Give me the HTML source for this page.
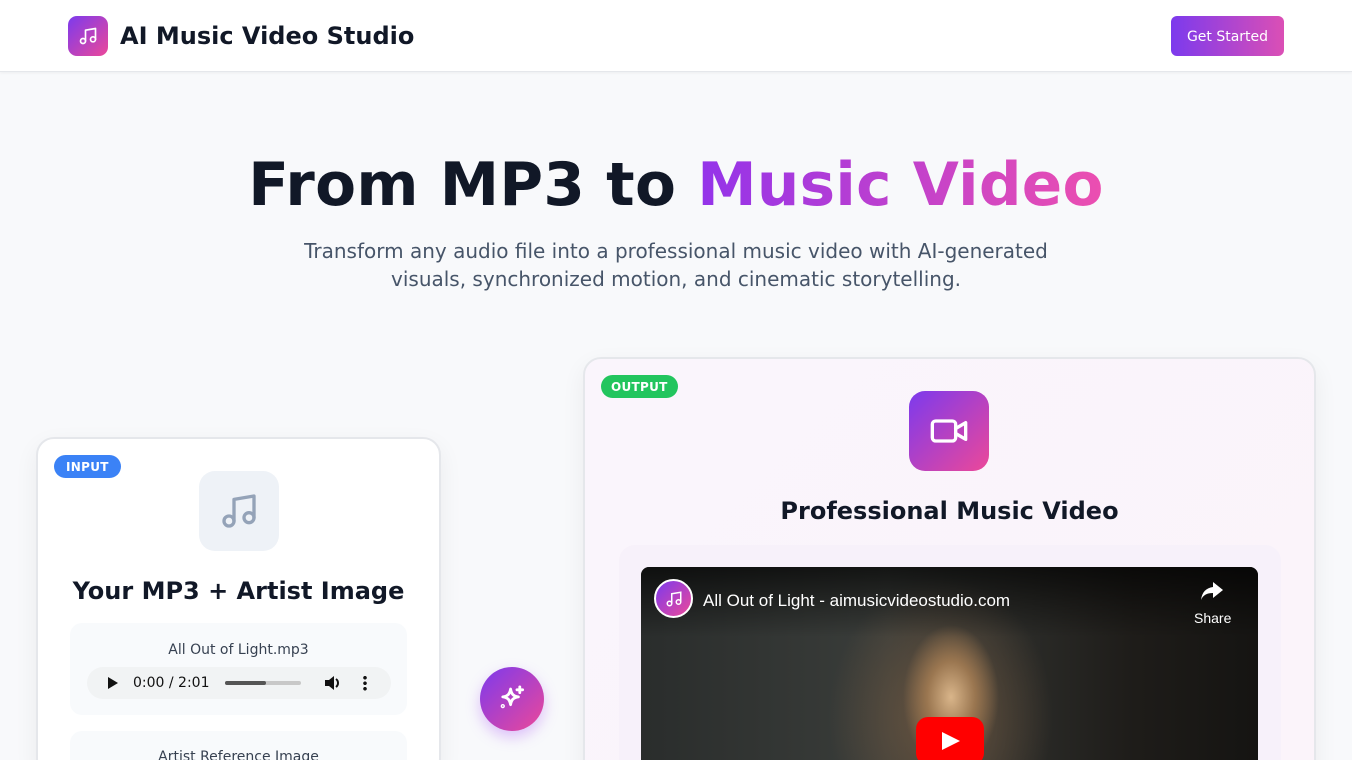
<!DOCTYPE html>
<html><head><meta charset="utf-8"><style>
*{box-sizing:border-box;margin:0;padding:0}
html{width:1352px;height:760px;overflow:hidden}
body{width:1352px;height:760px;overflow:hidden;background:#f8f9fb;font-family:"DejaVu Sans","Liberation Sans",sans-serif;position:relative;color:#0f172a}
.hdr{position:absolute;left:0;top:0;width:1352px;height:72px;background:#fff;border-bottom:1px solid #e5e7eb;box-shadow:0 1px 3px rgba(0,0,0,.05)}
.logo{position:absolute;left:68px;top:16px;width:40px;height:40px;border-radius:9px;background:linear-gradient(135deg,#7c3aed,#ec4899);display:flex;align-items:center;justify-content:center}
.brand{position:absolute;left:120px;top:22px;font-size:24px;font-weight:bold;color:#111827}
.btn{position:absolute;left:1171px;top:16px;width:113px;height:40px;border-radius:6px;background:linear-gradient(90deg,#7c3aed,#db4fb5);color:#fff;font-size:14px;display:flex;align-items:center;justify-content:center;padding-top:1px}
h1{position:absolute;left:0;width:1352px;top:151px;text-align:center;font-size:59.6px;font-weight:bold;color:#111827;letter-spacing:.3px}
h1 span{background:linear-gradient(90deg,#9333ea,#ec4fb0);-webkit-background-clip:text;color:transparent}
.sub{position:absolute;left:0;width:1352px;top:237px;text-align:center;font-size:20px;line-height:28px;color:#475569}
.card{position:absolute;background:#fff;border:2px solid #e5e7eb;border-radius:18px;box-shadow:0 8px 24px rgba(0,0,0,.06)}
.badge{position:absolute;color:#fff;font-size:12px;font-weight:bold;border-radius:12px;height:23px;display:flex;align-items:center;padding:0 12px;letter-spacing:.3px}
.in-ic{position:absolute;left:199px;top:471px;width:80px;height:80px;border-radius:16px;background:#eef2f7;display:flex;align-items:center;justify-content:center}
.t2{position:absolute;font-weight:bold;text-align:center}
.box{position:absolute;left:70px;width:337px;background:#f8fafc;border-radius:12px}
.player{position:absolute;left:87px;top:667px;width:304px;height:32px;border-radius:16px;background:#f1f3f4;font-size:14px;color:#111}
</style></head><body>
<div class="hdr">
<div class="logo"><svg width="20" height="20" viewBox="0 0 24 24" fill="none" stroke="#fff" stroke-width="2" stroke-linecap="round" stroke-linejoin="round"><path d="M9 18V5l12-2v13"/><circle cx="6" cy="18" r="3"/><circle cx="18" cy="16" r="3"/></svg></div>
<div class="brand">AI Music Video Studio</div>
<div class="btn">Get Started</div>
</div>
<h1>From MP3 to <span>Music Video</span></h1>
<div class="sub">Transform any audio file into a professional music video with AI-generated<br>visuals, synchronized motion, and cinematic storytelling.</div>

<div class="card" style="left:36px;top:437px;width:405px;height:340px"></div>
<div class="badge" style="left:54px;top:455px;background:#3b82f6">INPUT</div>
<div class="in-ic"><svg width="40" height="40" viewBox="0 0 24 24" fill="none" stroke="#94a3b8" stroke-width="2" stroke-linecap="round" stroke-linejoin="round"><path d="M9 18V5l12-2v13"/><circle cx="6" cy="18" r="3"/><circle cx="18" cy="16" r="3"/></svg></div>
<div class="t2" style="left:36px;width:405px;top:577px;font-size:24px;color:#111827">Your MP3 + Artist Image</div>
<div class="box" style="top:623px;height:92px"></div>
<div style="position:absolute;left:70px;width:337px;top:642px;text-align:center;font-size:14px;color:#374151">All Out of Light.mp3</div>
<div class="player">
<svg style="position:absolute;left:20px;top:10px" width="11" height="12" viewBox="0 0 11 12"><path d="M1 0L11 6L1 12Z" fill="#111"/></svg>
<span style="position:absolute;left:46px;top:8px">0:00 / 2:01</span>
<div style="position:absolute;left:138px;top:14px;width:76px;height:4px;background:#c8c8c8;border-radius:2px"><div style="width:41px;height:4px;background:#555;border-radius:2px"></div></div>
<svg style="position:absolute;left:237px;top:8px" width="18" height="16" viewBox="0 0 18 16"><path d="M1 5h4l5-4v14l-5-4H1z" fill="#111"/><path d="M12 4a5 5 0 010 8" stroke="#111" stroke-width="2" fill="none"/></svg>
<div style="position:absolute;left:276px;top:8px;width:4px;height:16px;background:radial-gradient(circle,#111 1.6px,transparent 2px) 0 0/4px 5.5px"></div>
</div>
<div class="box" style="top:731px;height:40px"></div>
<div style="position:absolute;left:70px;width:337px;top:749px;text-align:center;font-size:14px;color:#374151">Artist Reference Image</div>

<div style="position:absolute;left:480px;top:667px;width:64px;height:64px;border-radius:50%;background:linear-gradient(135deg,#7c3aed,#ec4899);box-shadow:0 6px 14px rgba(168,85,247,.35);display:flex;align-items:center;justify-content:center">
<svg width="34" height="34" viewBox="0 0 24 24" fill="none" stroke="#fff" stroke-width="2" stroke-linecap="round" stroke-linejoin="round"><path d="M11 5c.6 3.5 2 5 5.5 5.5C13 11 11.6 12.5 11 16c-.6-3.5-2-5-5.5-5.5C9 10 10.4 8.5 11 5z"/><path d="M17.5 3.5v4M15.5 5.5h4"/><circle cx="5.5" cy="17" r=".5"/></svg></div>

<div class="card" style="left:583px;top:357px;width:733px;height:430px;background:linear-gradient(135deg,#faf5fc,#fbf4fa)"></div>
<div class="badge" style="left:601px;top:375px;background:#22c55e;padding:0 10px">OUTPUT</div>
<div style="position:absolute;left:909px;top:391px;width:80px;height:80px;border-radius:16px;background:linear-gradient(135deg,#7c3aed,#ec4899);display:flex;align-items:center;justify-content:center">
<svg width="40" height="40" viewBox="0 0 24 24" fill="none" stroke="#fff" stroke-width="2" stroke-linecap="round" stroke-linejoin="round"><rect x="2" y="6" width="14" height="12" rx="2"/><path d="M16 10.5l6-3.5v10l-6-3.5"/></svg></div>
<div class="t2" style="left:583px;width:733px;top:497px;font-size:24px;color:#111827">Professional Music Video</div>
<div style="position:absolute;left:619px;top:545px;width:662px;height:215px;background:#f7f1fa;border-radius:16px 16px 0 0"></div>
<div style="position:absolute;left:641px;top:567px;width:617px;height:193px;border-radius:8px 8px 0 0;overflow:hidden;background:radial-gradient(ellipse 60px 90px at 310px 130px,#d9b58a 0%,#9a7650 40%,transparent 80%), radial-gradient(ellipse 160px 200px at 300px 150px,#6a5540,transparent 70%), linear-gradient(90deg,#2a2d2c,#3a3d3a 40%,#1e1c19 80%,#151412)">
<div style="position:absolute;left:0;top:0;width:617px;height:70px;background:linear-gradient(#000a,transparent)"></div>
<div style="position:absolute;left:13px;top:12px;width:39px;height:39px;border-radius:50%;background:linear-gradient(135deg,#7c3aed,#ec4899);border:2px solid #fff;display:flex;align-items:center;justify-content:center"><svg width="18" height="18" viewBox="0 0 24 24" fill="none" stroke="#fff" stroke-width="2"><path d="M9 18V5l12-2v13"/><circle cx="6" cy="18" r="3"/><circle cx="18" cy="16" r="3"/></svg></div>
<div style="position:absolute;left:62px;top:24px;color:#fff;font-size:17px;font-family:'Liberation Sans',sans-serif">All Out of Light - aimusicvideostudio.com</div>
<svg style="position:absolute;left:560px;top:15px" width="22" height="18" viewBox="0 0 22 18"><path d="M12 0l10 8-10 8v-5C6 11 2 13 0 18 1 10 5 6 12 5z" fill="#fff"/></svg>
<div style="position:absolute;left:553px;top:43px;color:#fff;font-size:14px;font-family:'Liberation Sans',sans-serif">Share</div>
<div style="position:absolute;left:275px;top:150px;width:68px;height:48px;border-radius:12px;background:#f00"><svg style="position:absolute;left:26px;top:15px" width="18" height="18" viewBox="0 0 18 18"><path d="M0 0L18 9L0 18Z" fill="#fff"/></svg></div>
</div>
</body></html>
